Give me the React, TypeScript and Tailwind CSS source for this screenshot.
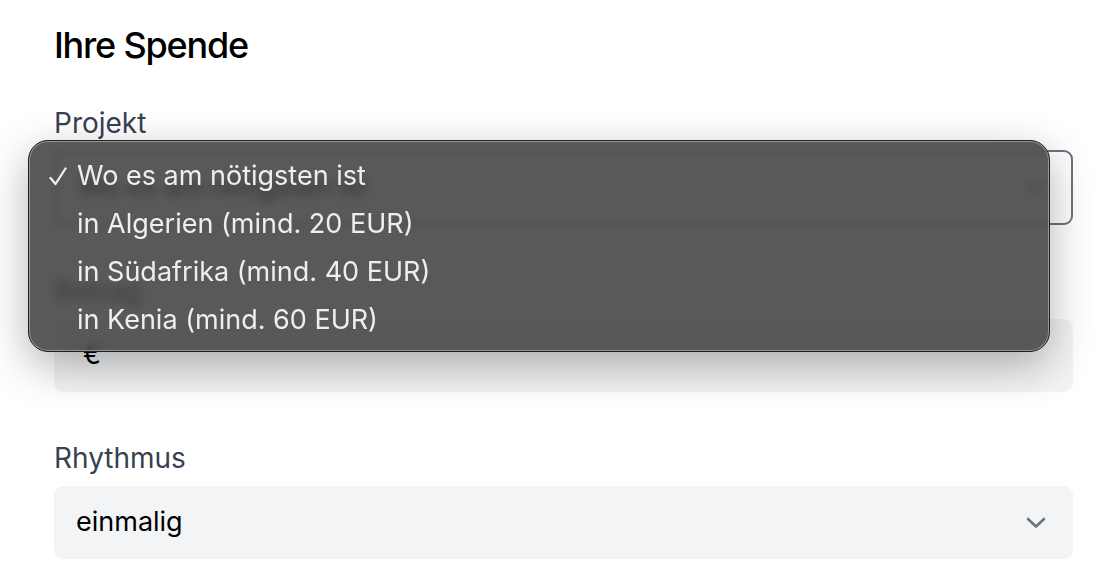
import React from 'react';

const FONT = { fontFamily: 'Inter, "Noto Sans", "Liberation Sans", sans-serif' };

const options = [
  'Wo es am nötigsten ist',
  'in Algerien (mind. 20 EUR)',
  'in Südafrika (mind. 40 EUR)',
  'in Kenia (mind. 60 EUR)',
];

const Chevron: React.FC = () => (
  <svg width="20" height="12" viewBox="0 0 20 12" fill="none" className="shrink-0">
    <polyline points="2,2 10,9.5 18,2" stroke="#6b7280" strokeWidth="2.6" strokeLinecap="round" strokeLinejoin="round" />
  </svg>
);

const Check: React.FC = () => (
  <svg width="18" height="19" viewBox="0 0 18 19" fill="none">
    <path d="M1.5 11 L6.5 17 L16.5 1.5" stroke="#eeeeee" strokeWidth="2.3" strokeLinecap="round" strokeLinejoin="round" />
  </svg>
);

const App: React.FC = () => {
  return (
    <div className="relative w-full h-[576px] overflow-hidden bg-white pl-[54px] pr-[21px] pt-[25px]" style={FONT}>
      <h2 className="text-[36px] leading-[40px] font-medium tracking-[-1.2px] text-black">Ihre Spende</h2>

      {/* PROJEKT */}
      <div className="mt-[38px]">
        <label className="block text-[28px] leading-[40px] text-[#374151]">Projekt</label>
        <div className="mt-[7px] h-[75px] rounded-[9px] border-2 border-[#6b7280] bg-white flex items-center justify-between pl-[22px] pr-[26px]">
          <span className="text-[27px] text-black">Wo es am nötigsten ist</span>
          <Chevron />
        </div>
      </div>

      {/* BETRAG */}
      <div className="mt-[46px]">
        <label className="block text-[28px] leading-[40px] text-[#374151]">Betrag</label>
        <div className="mt-[8px] h-[73px] rounded-[9px] bg-[#f3f4f6] flex items-center pl-[29px]">
          <span className="text-[27px] text-black">€</span>
        </div>
      </div>

      {/* RHYTHMUS */}
      <div className="mt-[46px]">
        <label className="block text-[28px] leading-[40px] text-[#374151]">Rhythmus</label>
        <div className="mt-[8px] h-[73px] rounded-[9px] bg-[#f3f4f6] flex items-center justify-between pl-[22px] pr-[27px]">
          <span className="text-[27px] text-black">einmalig</span>
          <Chevron />
        </div>
      </div>

      {/* NATIVE SELECT MENU */}
      <div className="absolute left-[28px] top-[140px] w-[1022px] h-[212px] rounded-[20px] border border-[#1f1f1f] bg-[rgba(62,62,62,0.86)] backdrop-blur-[5px] shadow-[inset_0_0_0_1px_rgba(255,255,255,0.38),0_14px_44px_rgba(0,0,0,0.3)] pt-[11px] pb-[8px]">
        {options.map((opt, i) => (
          <div key={opt} className="h-[48px] flex items-center text-[27px] text-[#eeeeee]">
            <span className="w-[48px] pl-[20px] flex items-center">{i === 0 ? <Check /> : null}</span>
            <span>{opt}</span>
          </div>
        ))}
      </div>
    </div>
  );
};

export default App;
